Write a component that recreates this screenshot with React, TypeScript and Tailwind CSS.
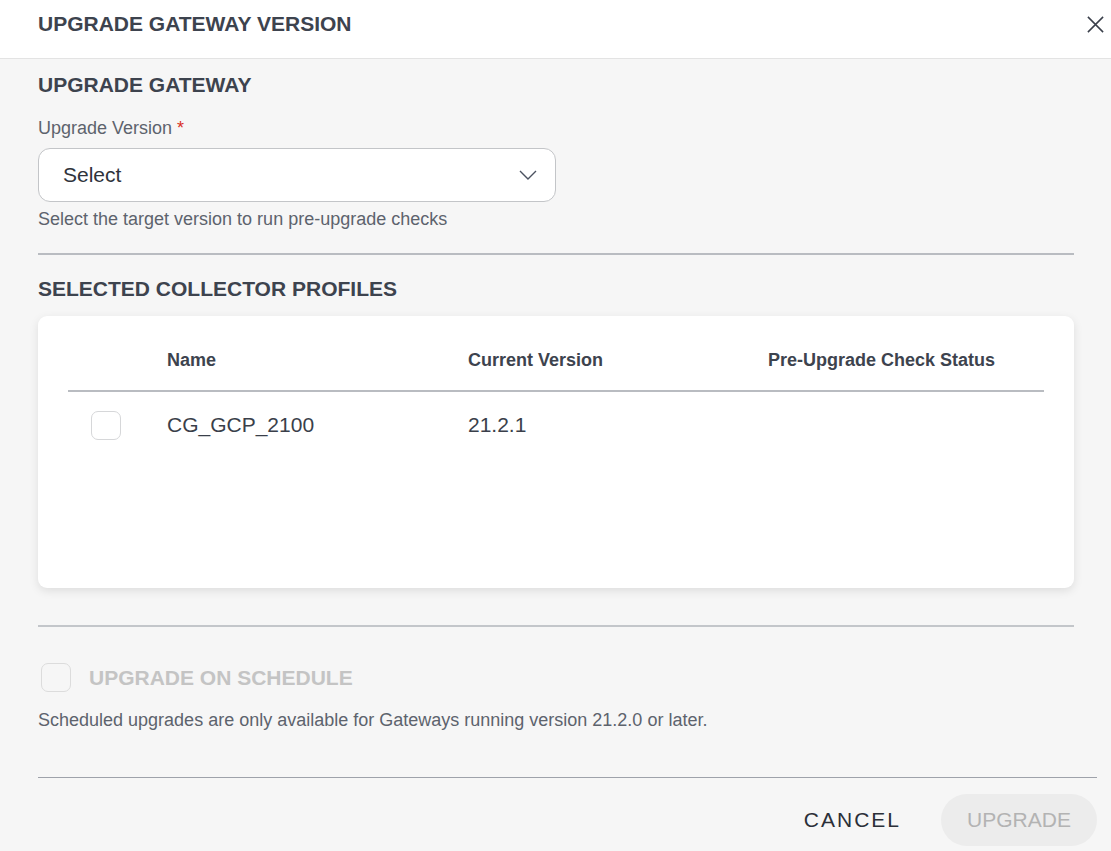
import React from 'react';

const font = { fontFamily: '"Liberation Sans", Arial, sans-serif' };

const ChevronDown: React.FC = () => (
  <svg width="18" height="10" viewBox="0 0 18 10" fill="none" stroke="#4b5260" strokeWidth="1.4">
    <path d="M1 1l8 8 8-8" />
  </svg>
);

const CloseIcon: React.FC = () => (
  <svg width="19" height="19" viewBox="0 0 20 20" fill="none" stroke="#3a3f4a" strokeWidth="1.6">
    <path d="M2 2l16 16M18 2L2 18" />
  </svg>
);

/** Modal de mise à jour de la passerelle. */
export default function App() {
  return (
    <div style={font} className="flex h-[851px] w-[1111px] flex-col overflow-hidden bg-[#f6f6f6] text-[#3d434e]">
      {/* En-tête */}
      <div className="flex h-[59px] flex-none items-start justify-between border-b border-[#e3e3e3] bg-white pl-[38px]">
        <div className="mt-[12px] text-[21px] font-bold leading-[24px] text-[#3d434e]">UPGRADE GATEWAY VERSION</div>
        <button className="mt-[8px] flex h-[32px] w-[32px] items-center justify-center">
          <CloseIcon />
        </button>
      </div>

      <div className="flex flex-col pl-[38px] pr-[37px]">
        <div className="mt-[14px] text-[21px] font-bold leading-[24px]">UPGRADE GATEWAY</div>
        <div className="mt-[21px] text-[18px] leading-[20px] text-[#5d636d]">
          Upgrade Version <span className="text-[#d93025]">*</span>
        </div>
        <div className="mt-[10px] flex h-[54px] w-[518px] items-center justify-between rounded-[12px] border border-[#c3c5c8] bg-white pl-[24px] pr-[18px]">
          <span className="text-[21px] text-[#2f333b]">Select</span>
          <ChevronDown />
        </div>
        <div className="mt-[7px] text-[18px] leading-[20px] text-[#5d636d]">Select the target version to run pre-upgrade checks</div>
        <div className="mt-[24px] h-[2px] bg-[#b9bcc1]" />

        <div className="mt-[22px] text-[21px] font-bold leading-[24px]">SELECTED COLLECTOR PROFILES</div>
        <div className="mt-[15px] h-[272px] rounded-[9px] bg-white px-[30px] shadow-[0_3px_10px_rgba(0,0,0,0.10)]">
          <div className="grid h-[76px] grid-cols-[99px_301px_300px_1fr] items-center border-b-2 border-[#b9bcc1] pt-[14px] text-[18px] font-bold leading-[20px]">
            <div />
            <div>Name</div>
            <div>Current Version</div>
            <div>Pre-Upgrade Check Status</div>
          </div>
          <div className="grid h-[66px] grid-cols-[99px_301px_300px_1fr] items-center text-[21px] text-[#3a3f4a]">
            <div className="pl-[23px]">
              <div className="h-[29px] w-[30px] rounded-[7px] border border-[#d6d7d9] bg-white" />
            </div>
            <div>CG_GCP_2100</div>
            <div>21.2.1</div>
            <div />
          </div>
        </div>

        <div className="mt-[37px] h-[2px] bg-[#c3c6ca]" />
        <div className="mt-[36px] flex h-[29px] items-center gap-[18px] pl-[3px]">
          <div className="h-[29px] w-[30px] rounded-[7px] border border-[#dcdcdc]" />
          <span className="text-[21px] font-bold text-[#c4c4c4]">UPGRADE ON SCHEDULE</span>
        </div>
        <div className="mt-[18px] text-[18px] leading-[20px] text-[#5d636d]">
          Scheduled upgrades are only available for Gateways running version 21.2.0 or later.
        </div>
      </div>

      <div className="mt-[47px] ml-[38px] mr-[14px] h-[1px] bg-[#9ea2aa]" />
      <div className="mt-[16px] flex items-center justify-end gap-[40px] pr-[14px]">
        <button className="text-[21px] tracking-[2px] text-[#2b2f38]">CANCEL</button>
        <button className="h-[52px] w-[156px] rounded-full bg-[#ececec] text-[21px] text-[#b3b3b3]">UPGRADE</button>
      </div>
    </div>
  );
}
